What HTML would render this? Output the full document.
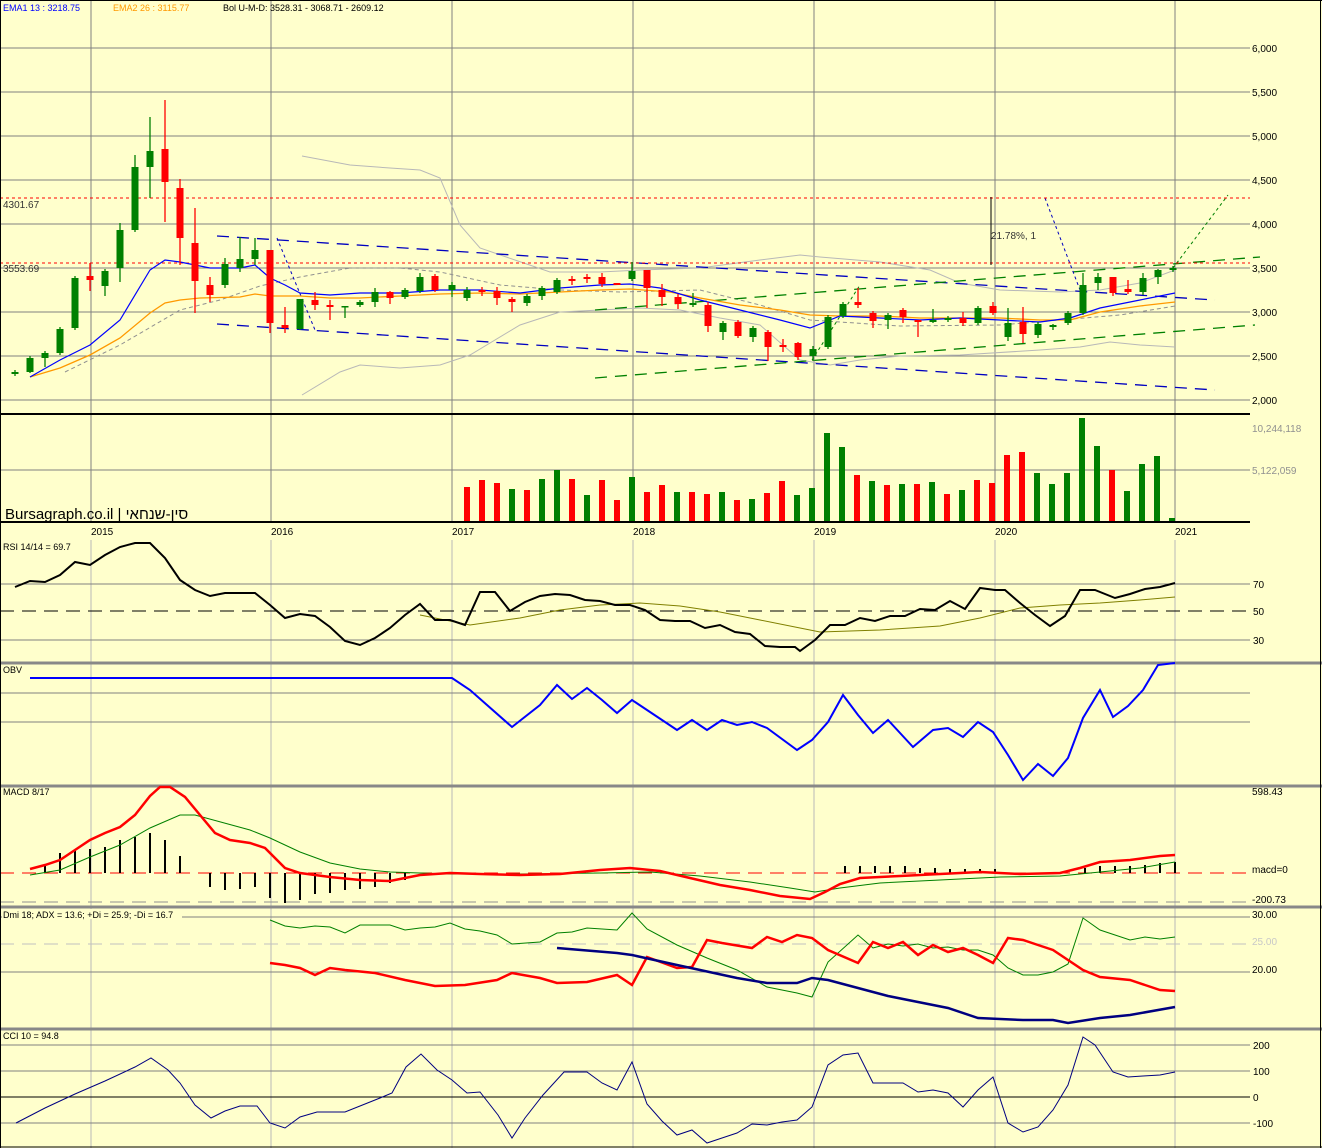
<!DOCTYPE html>
<html><head><meta charset="utf-8"><style>
html,body{margin:0;padding:0;background:#ffffcc;}
svg{display:block;font-family:"Liberation Sans","Noto Sans CJK SC",sans-serif;}
text{font-size:10px;}
</style></head><body>
<svg id="s" width="1322" height="1148" viewBox="0 0 1322 1148" xmlns="http://www.w3.org/2000/svg">
<rect width="1322" height="1148" fill="#ffffcc"/>
<!-- price grid -->
<g stroke="#808080" stroke-width="1">
<line x1="0" y1="48" x2="1250" y2="48"/><line x1="0" y1="92" x2="1250" y2="92"/><line x1="0" y1="136" x2="1250" y2="136"/><line x1="0" y1="180" x2="1250" y2="180"/><line x1="0" y1="224" x2="1250" y2="224"/><line x1="0" y1="268" x2="1250" y2="268"/><line x1="0" y1="312" x2="1250" y2="312"/><line x1="0" y1="356" x2="1250" y2="356"/><line x1="0" y1="400" x2="1250" y2="400"/>
<line x1="0" y1="470" x2="1250" y2="470"/>
</g>
<g stroke="#808080">
<line x1="91" y1="0" x2="91" y2="522"/><line x1="271" y1="0" x2="271" y2="522"/><line x1="452" y1="0" x2="452" y2="522"/><line x1="633" y1="0" x2="633" y2="522"/><line x1="814" y1="0" x2="814" y2="522"/><line x1="995" y1="0" x2="995" y2="522"/><line x1="1175" y1="0" x2="1175" y2="522"/>
</g>
<g stroke="#b8b8b8">
<line x1="91" y1="540" x2="91" y2="1148"/><line x1="271" y1="540" x2="271" y2="1148"/><line x1="452" y1="540" x2="452" y2="1148"/><line x1="633" y1="540" x2="633" y2="1148"/><line x1="814" y1="540" x2="814" y2="1148"/><line x1="995" y1="540" x2="995" y2="1148"/><line x1="1175" y1="540" x2="1175" y2="1148"/>
</g>
<g fill="#000"><text x="1252" y="52">6,000</text><text x="1252" y="96">5,500</text><text x="1252" y="140">5,000</text><text x="1252" y="184">4,500</text><text x="1252" y="228">4,000</text><text x="1252" y="272">3,500</text><text x="1252" y="316">3,000</text><text x="1252" y="360">2,500</text><text x="1252" y="404">2,000</text></g>
<text x="1252" y="432" fill="#909090">10,244,118</text><text x="1252" y="474" fill="#909090">5,122,059</text>
<!-- bollinger -->
<g fill="none" stroke="#b8b8b8">
<polyline points="302,156 350,165 390,168 420,170 440,178 460,225 480,248 550,272 600,272 640,270 700,268 760,260 800,255 820,257 880,262 930,270 960,283 1000,290 1060,292 1100,290 1140,283 1175,270"/>
<polyline points="302,395 340,372 360,365 400,368 440,365 470,355 520,325 560,312 600,310 640,308 680,310 720,318 760,325 800,360 830,365 860,360 900,356 960,355 1040,350 1080,347 1110,342 1140,345 1175,347"/>
</g>
<polyline fill="none" stroke="#909090" stroke-dasharray="4,3" points="65,372 120,345 180,310 220,300 260,286 300,277 350,268 400,268 440,272 500,285 560,290 620,292 700,290 760,305 810,320 900,326 1000,325 1060,320 1120,315 1175,306"/>
<!-- channels -->
<g fill="none" stroke-dasharray="12,8" stroke-width="1.3">
<line x1="217" y1="236" x2="1215" y2="300" stroke="#0000c0"/>
<line x1="217" y1="324" x2="1215" y2="390" stroke="#0000c0"/>
<line x1="595" y1="378" x2="1255" y2="325" stroke="#008000"/>
<line x1="595" y1="310" x2="1260" y2="257" stroke="#008000"/>
</g>
<g fill="none" stroke-dasharray="3,3">
<line x1="1045" y1="198" x2="1080" y2="290" stroke="#0000c0"/>
<line x1="277" y1="238" x2="315" y2="330" stroke="#0000c0"/>
<line x1="812" y1="360" x2="860" y2="285" stroke="#008000"/>
<line x1="1173" y1="268" x2="1228" y2="195" stroke="#008000"/>
</g>
<g stroke="#ff0000" stroke-dasharray="3,3"><line x1="0" y1="198" x2="1250" y2="198"/><line x1="0" y1="263" x2="1250" y2="263"/></g>
<text x="3" y="208" fill="#333">4301.67</text><text x="3" y="272" fill="#333">3553.69</text>
<line x1="991" y1="197" x2="991" y2="265" stroke="#000"/>
<text x="991" y="239" fill="#333">21.78%, 1</text>
<!-- EMAs -->
<polyline fill="none" stroke="#ff9900" stroke-width="1.3" points="30,377 60,368 90,355 120,338 150,313 165,303 180,300 200,298 240,297 255,294 270,296 300,296 330,298 360,298 400,296 440,294 480,293 520,294 560,292 600,290 630,289 670,292 700,298 740,305 780,310 810,315 840,316 880,316 920,318 960,318 1000,318 1040,320 1070,320 1100,312 1140,306 1175,302"/>
<polyline fill="none" stroke="#0000ff" stroke-width="1.2" points="30,377 60,360 90,345 120,320 150,270 165,260 180,262 195,265 210,268 240,268 255,265 270,278 285,285 300,293 330,295 360,293 400,293 440,290 480,290 520,293 560,288 600,285 630,284 660,288 700,300 740,310 780,320 810,328 840,316 880,318 920,320 960,318 1000,320 1040,322 1070,318 1100,308 1140,300 1175,293"/>
<g id="candles"></g>
<g id="vol"></g>
<line x1="0" y1="414" x2="1250" y2="414" stroke="#000" stroke-width="2"/>
<line x1="0" y1="522" x2="1250" y2="522" stroke="#000" stroke-width="2"/>
<text x="5" y="519" style="font-size:15px" fill="#000">Bursagraph.co.il | סין-שנחאי</text>
<g fill="#000" style="font-size:11px"><text x="91" y="535">2015</text><text x="271" y="535">2016</text><text x="452" y="535">2017</text><text x="633" y="535">2018</text><text x="814" y="535">2019</text><text x="995" y="535">2020</text><text x="1175" y="535">2021</text></g>
<text x="3" y="550" fill="#000" style="font-size:9px">RSI 14/14 = 69.7</text>
<!-- RSI -->
<g stroke="#808080"><line x1="0" y1="584" x2="1250" y2="584"/><line x1="0" y1="640" x2="1250" y2="640"/></g>
<line x1="0" y1="611" x2="1250" y2="611" stroke="#000" stroke-dasharray="14,8"/>
<g fill="#000"><text x="1253" y="588">70</text><text x="1253" y="615">50</text><text x="1253" y="644">30</text></g>
<polyline fill="none" stroke="#808000" points="420,615 470,625 520,618 560,610 600,605 640,603 680,606 720,612 760,620 800,628 820,632 880,630 940,626 980,618 1020,608 1060,605 1100,603 1140,600 1175,597"/>
<polyline fill="none" stroke="#000" stroke-width="2" points="15,587 30,581 45,582 60,575 75,562 90,565 105,555 120,547 135,543 150,543 165,558 180,580 195,590 210,596 225,593 255,593 270,605 285,618 300,614 315,616 330,627 345,641 360,645 375,638 390,628 405,615 420,604 435,620 450,620 465,625 480,592 495,592 510,611 525,602 540,596 555,594 570,595 585,600 600,601 615,605 630,605 645,610 660,620 675,621 690,621 705,628 720,625 735,632 750,634 765,646 780,647 795,647 800,651 815,640 830,625 845,625 860,618 875,621 890,616 905,616 920,609 935,610 950,601 965,609 980,588 995,590 1005,590 1020,603 1035,615 1050,626 1065,616 1080,590 1095,590 1115,598 1130,594 1145,589 1160,587 1175,583"/>
<!-- OBV -->
<line x1="0" y1="663" x2="1322" y2="663" stroke="#888" stroke-width="3"/>
<g stroke="#808080"><line x1="0" y1="693" x2="1250" y2="693"/><line x1="0" y1="722" x2="1250" y2="722"/></g>
<text x="3" y="673" fill="#000" style="font-size:9px">OBV</text>
<polyline fill="none" stroke="#0000ff" stroke-width="2" points="30,678 452,678 470,690 512,727 540,705 557,685 572,699 587,688 602,700 617,713 632,700 677,730 692,720 707,730 722,720 737,725 752,722 767,728 797,750 812,740 828,722 843,695 858,715 873,733 888,720 913,747 933,730 948,728 963,737 978,722 993,732 1008,755 1023,780 1038,764 1053,776 1068,758 1083,718 1100,690 1113,717 1128,706 1143,690 1158,665 1175,663"/>
<!-- MACD -->
<line x1="0" y1="786" x2="1322" y2="786" stroke="#888" stroke-width="3"/>
<line x1="0" y1="902" x2="1250" y2="902" stroke="#909090" stroke-dasharray="14,8"/>
<line x1="0" y1="873" x2="1250" y2="873" stroke="#ff0000" stroke-dasharray="14,8"/>
<text x="3" y="795" fill="#000" style="font-size:9px">MACD 8/17</text>
<g fill="#000"><text x="1252" y="795">598.43</text><text x="1252" y="873">macd=0</text><text x="1252" y="903">-200.73</text></g>
<g id="hist" stroke="#000" stroke-width="2"></g>
<polyline fill="none" stroke="#008000" points="30,875 60,870 90,857 120,845 150,828 180,815 195,815 250,830 270,838 300,852 330,863 360,869 390,872 450,874 520,874 600,873 650,872 700,876 750,882 790,888 815,892 840,888 880,883 940,880 1000,877 1060,876 1100,872 1140,868 1175,862"/>
<polyline fill="none" stroke="#ff0000" stroke-width="2.5" points="30,869 45,865 60,860 75,850 90,840 105,833 120,827 135,815 150,796 160,787 170,787 185,797 200,815 215,833 230,840 250,843 265,848 285,868 300,873 330,877 360,880 390,881 405,878 420,875 450,873 480,874 520,875 560,874 600,870 630,868 660,871 690,878 720,885 750,890 780,896 810,899 825,892 840,884 860,878 900,876 940,874 980,872 1020,874 1060,873 1080,868 1100,862 1130,860 1160,856 1175,855"/>
<!-- DMI -->
<line x1="0" y1="907" x2="1322" y2="907" stroke="#888" stroke-width="3"/>
<g stroke="#808080"><line x1="0" y1="917" x2="1250" y2="917"/><line x1="0" y1="972" x2="1250" y2="972"/></g>
<line x1="0" y1="944" x2="1250" y2="944" stroke="#c0c0c0" stroke-dasharray="14,8"/>
<rect x="2" y="909" width="180" height="10" fill="#ffffcc"/>
<text x="3" y="918" fill="#000" style="font-size:9px">Dmi 18; ADX = 13.6; +Di = 25.9; -Di = 16.7</text>
<g fill="#000"><text x="1252" y="918">30.00</text><text x="1252" y="973">20.00</text></g><text x="1252" y="945" fill="#c8c8c8">25.00</text>
<polyline fill="none" stroke="#008000" points="270,920 285,926 300,928 315,926 330,927 345,933 360,925 375,925 390,925 405,930 420,928 435,927 450,923 465,929 480,931 497,935 512,944 540,942 557,933 572,932 587,928 617,930 632,913 647,929 677,945 707,958 737,970 767,987 797,993 812,997 828,962 858,935 873,948 888,944 903,946 918,944 933,948 948,947 963,950 978,950 993,955 1008,968 1023,975 1038,975 1053,972 1068,964 1083,918 1100,930 1130,940 1145,937 1160,939 1175,937"/>
<polyline fill="none" stroke="#ff0000" stroke-width="2.5" points="270,963 285,965 300,968 315,975 330,968 345,970 375,973 405,980 435,986 465,985 497,980 512,973 540,978 557,983 587,982 617,975 632,985 647,957 677,968 692,967 707,940 722,943 752,948 767,937 782,942 797,935 812,938 828,950 858,963 873,942 888,948 903,942 918,955 933,945 948,952 963,948 978,955 993,963 1008,938 1023,940 1038,945 1053,950 1068,960 1083,970 1100,977 1130,980 1145,985 1160,990 1175,991"/>
<polyline fill="none" stroke="#000080" stroke-width="2.5" points="557,948 617,953 632,955 677,965 737,978 767,983 797,983 812,978 828,980 858,988 888,996 918,1002 948,1008 978,1018 1023,1020 1053,1020 1068,1023 1100,1018 1130,1015 1175,1007"/>
<!-- CCI -->
<line x1="0" y1="1029" x2="1322" y2="1029" stroke="#888" stroke-width="3"/>
<g stroke="#808080"><line x1="0" y1="1045" x2="1250" y2="1045"/><line x1="0" y1="1071" x2="1250" y2="1071"/><line x1="0" y1="1123" x2="1250" y2="1123"/></g>
<line x1="0" y1="1097" x2="1250" y2="1097" stroke="#000"/>
<text x="3" y="1039" fill="#000" style="font-size:9px">CCI 10 = 94.8</text>
<g fill="#000"><text x="1253" y="1049">200</text><text x="1253" y="1075">100</text><text x="1253" y="1101">0</text><text x="1253" y="1127">-100</text></g>
<polyline fill="none" stroke="#000080" points="16,1123 45,1108 75,1094 105,1081 135,1067 151,1058 168,1070 180,1083 195,1105 211,1118 225,1111 240,1106 257,1106 270,1123 285,1128 300,1117 317,1112 345,1112 360,1106 380,1098 392,1093 406,1067 421,1054 437,1070 452,1080 467,1093 480,1092 498,1115 512,1138 525,1118 543,1095 564,1072 587,1072 602,1083 617,1090 632,1062 647,1104 662,1121 677,1135 692,1130 707,1143 722,1138 737,1133 752,1124 767,1125 782,1122 797,1120 812,1107 828,1065 843,1055 858,1053 873,1083 888,1083 903,1083 918,1092 933,1090 948,1093 963,1107 978,1090 993,1077 1008,1123 1023,1132 1038,1127 1053,1110 1068,1085 1083,1037 1095,1045 1113,1072 1128,1077 1143,1076 1160,1075 1175,1072"/>
<!-- top headers -->
<text x="3" y="11" fill="#0000ff" style="font-size:9px">EMA1 13 : 3218.75</text>
<text x="113" y="11" fill="#ff9900" style="font-size:9px">EMA2 26 : 3115.77</text>
<text x="223" y="11" fill="#000" style="font-size:9px">Bol U-M-D: 3528.31 - 3068.71 - 2609.12</text>
<!-- borders -->
<line x1="0" y1="0.5" x2="1322" y2="0.5" stroke="#000"/>
<line x1="0.5" y1="0" x2="0.5" y2="1148" stroke="#000"/>
<line x1="1320.5" y1="0" x2="1320.5" y2="1148" stroke="#000"/>
<line x1="0" y1="1147" x2="1322" y2="1147" stroke="#000"/>
</svg>
<script>
var NS="http://www.w3.org/2000/svg";
function el(p,t,a){var e=document.createElementNS(NS,t);for(var k in a)e.setAttribute(k,a[k]);p.appendChild(e);return e;}
// x, bodyTop, bodyBot, wickTop, wickBot, g/r
var C=[[15,372,374,370,376,'g'],[30,358,372,356,373,'g'],[45,353,358,351,367,'g'],[60,329,353,327,355,'g'],[75,278,328,276,330,'g'],[90,276,280,263,291,'r'],[105,271,286,269,296,'g'],[120,230,268,223,282,'g'],[135,167,230,155,232,'g'],[150,151,167,117,198,'g'],[165,149,182,100,222,'r'],[180,188,238,179,265,'r'],[195,243,281,208,313,'r'],[210,285,295,277,302,'r'],[225,264,285,258,288,'g'],[240,259,268,237,272,'g'],[255,250,259,238,265,'g'],[270,250,323,250,333,'r'],[285,325,328,307,333,'r'],[300,299,329,299,330,'g'],[315,300,305,292,310,'r'],[330,305,307,300,320,'r'],[345,306,307,306,318,'g'],[360,302,305,300,307,'g'],[375,292,302,288,307,'g'],[390,292,298,291,304,'r'],[405,290,297,288,299,'g'],[420,277,291,273,293,'g'],[435,276,290,274,292,'r'],[452,285,290,282,297,'g'],[467,290,298,287,301,'g'],[482,290,292,287,296,'r'],[497,291,298,287,305,'r'],[512,299,302,297,312,'r'],[527,296,303,294,306,'g'],[542,288,296,286,300,'g'],[557,280,292,278,294,'g'],[572,279,281,276,285,'r'],[587,277,279,274,283,'r'],[602,277,284,273,287,'r'],[617,283,285,283,285,'r'],[632,271,279,262,281,'g'],[647,270,288,270,308,'r'],[662,290,297,284,306,'r'],[678,297,304,294,309,'r'],[693,303,305,293,307,'g'],[708,305,326,302,332,'r'],[723,323,332,321,340,'g'],[738,322,336,320,338,'r'],[753,328,337,326,342,'g'],[768,332,347,330,361,'r'],[783,345,347,339,352,'r'],[798,343,357,342,360,'r'],[813,349,356,346,361,'g'],[828,317,347,315,349,'g'],[843,304,316,302,318,'g'],[858,302,305,288,308,'r'],[873,313,321,311,328,'r'],[888,315,320,313,329,'g'],[903,310,317,308,323,'r'],[918,320,322,320,337,'r'],[933,320,322,309,323,'g'],[948,318,320,316,322,'g'],[963,318,323,312,326,'r'],[978,308,323,306,325,'g'],[993,306,313,302,315,'r'],[1008,323,337,308,341,'g'],[1023,322,334,307,343,'r'],[1038,324,335,322,338,'g'],[1053,325,327,324,330,'g'],[1068,313,323,311,325,'g'],[1083,285,313,273,315,'g'],[1098,277,283,273,290,'g'],[1113,277,293,277,296,'r'],[1128,289,292,280,294,'r'],[1143,278,292,273,295,'g'],[1158,270,277,269,284,'g'],[1173,268,270,266,272,'g']];
var g=document.getElementById('candles');
C.forEach(function(c){var col=c[5]=='g'?'#008000':'#ff0000';
el(g,'line',{x1:c[0],x2:c[0],y1:c[3],y2:c[4],stroke:col,'stroke-width':1.3});
el(g,'rect',{x:c[0]-3.5,y:c[1],width:7,height:Math.max(1.5,c[2]-c[1]),fill:col});});
var V=[[467,487,'r'],[482,480,'r'],[497,483,'r'],[512,489,'g'],[527,490,'r'],[542,479,'g'],[557,470,'g'],[572,479,'r'],[587,495,'g'],[602,480,'r'],[617,500,'r'],[632,477,'g'],[647,492,'r'],[662,485,'r'],[677,492,'g'],[692,492,'r'],[707,494,'r'],[722,492,'g'],[737,500,'r'],[752,499,'g'],[767,493,'r'],[782,481,'r'],[797,495,'g'],[812,488,'g'],[827,433,'g'],[842,447,'g'],[857,475,'r'],[872,481,'g'],[887,485,'r'],[902,484,'g'],[917,484,'r'],[932,482,'g'],[947,494,'r'],[962,490,'g'],[977,480,'r'],[992,483,'r'],[1007,455,'r'],[1022,452,'r'],[1037,473,'g'],[1052,484,'g'],[1067,473,'g'],[1082,418,'g'],[1097,446,'g'],[1112,470,'r'],[1127,491,'g'],[1142,464,'g'],[1157,456,'g'],[1172,518,'g']];
var v=document.getElementById('vol');
V.forEach(function(b){el(v,'rect',{x:b[0]-3,y:b[1],width:6,height:522-b[1],fill:b[2]=='g'?'#008000':'#ff0000'});});
var H=[[45,866],[60,853],[75,850],[90,849],[105,847],[120,840],[135,837],[150,833],[165,840],[180,856],[210,887],[225,890],[240,889],[255,887],[270,898],[285,903],[300,900],[315,894],[330,893],[345,890],[360,889],[375,887],[390,883],[405,880],[845,866],[860,866],[875,866],[890,866],[905,866],[920,868],[935,868],[950,869],[965,869],[980,869],[995,869],[1085,868],[1100,866],[1115,866],[1130,866],[1145,865],[1160,863],[1175,862]];
var h=document.getElementById('hist');
H.forEach(function(b){el(h,'line',{x1:b[0],x2:b[0],y1:873,y2:b[1]});});
</script>
</body></html>
